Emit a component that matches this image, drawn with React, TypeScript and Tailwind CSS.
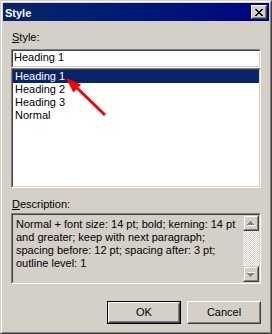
import React from "react";

const sunkenOuter =
  "border border-t-[#808080] border-l-[#808080] border-b-white border-r-white";
const sunkenInner =
  "border border-t-[#404040] border-l-[#404040] border-b-[#d4d0c8] border-r-[#d4d0c8]";
const raisedOuter =
  "border border-t-white border-l-white border-b-[#404040] border-r-[#404040]";
const raisedInner =
  "border border-t-[#d4d0c8] border-l-[#d4d0c8] border-b-[#808080] border-r-[#808080]";
const scrollOuter =
  "border border-t-[#d4d0c8] border-l-[#d4d0c8] border-b-[#404040] border-r-[#404040]";
const scrollInner =
  "border border-t-white border-l-white border-b-[#808080] border-r-[#808080]";

const styles = ["Heading 1", "Heading 2", "Heading 3", "Normal"];

const description = [
  "Normal + font size: 14 pt; bold; kerning: 14 pt",
  "and greater; keep with next paragraph;",
  "spacing before: 12 pt; spacing after: 3 pt;",
  "outline level: 1",
];

const CloseGlyph = () => (
  <svg width="8" height="7" viewBox="0 0 8 7" shapeRendering="crispEdges">
    <path
      d="M0 0h2v1h-2zM6 0h2v1h-2zM1 1h2v1h-2zM5 1h2v1h-2zM2 2h4v1h-4zM3 3h2v1h-2zM2 4h4v1h-4zM1 5h2v1h-2zM5 5h2v1h-2zM0 6h2v1h-2zM6 6h2v1h-2z"
      fill="#000"
    />
  </svg>
);

const ScrollArrow = ({ down }: { down?: boolean }) => (
  <div className={`w-[16px] h-[16px] ${scrollOuter}`}>
    <div className={`w-full h-full flex items-center justify-center ${scrollInner}`}>
      <svg width="8" height="5" viewBox="0 0 8 5" shapeRendering="crispEdges">
        <g transform={down ? "translate(0 5) scale(1 -1)" : undefined}>
          <path d="M4 1h1v1h-1zM3 2h3v1h-3zM2 3h5v1h-5zM1 4h7v1h-7z" fill="#fff" />
          <path d="M3 0h1v1h-1zM2 1h3v1h-3zM1 2h5v1h-5zM0 3h7v1h-7z" fill="#808080" />
        </g>
      </svg>
    </div>
  </div>
);

const Label = ({ hot, rest }: { hot: string; rest: string }) => (
  <div className="h-[13px] leading-[13px] pl-px">
    <span className="underline underline-offset-[1px]">{hot}</span>
    {rest}
  </div>
);

export default function App() {
  return (
    <div
      className="relative w-[272px] h-[334px] bg-[#d4d0c8] text-[11px] text-black border border-t-[#d4d0c8] border-l-[#d4d0c8] border-b-[#404040] border-r-[#404040]"
      style={{ fontFamily: '"Liberation Sans", Arial, sans-serif' }}
    >
      <div className="w-full h-full border border-t-white border-l-white border-b-[#808080] border-r-[#808080] p-px flex flex-col">
        {/* TITLE */}
        <div className="h-[18px] flex items-start justify-between bg-gradient-to-r from-[#0a246a] to-[#000080]">
          <span className="pl-[2px] pt-[4px] leading-[13px] font-bold text-white">Style</span>
          <div className={`mt-[2px] mr-[2px] w-[16px] h-[14px] bg-[#d4d0c8] ${raisedOuter}`}>
            <div className={`w-full h-full flex items-center justify-center ${raisedInner}`}>
              <CloseGlyph />
            </div>
          </div>
        </div>

        {/* BODY */}
        <div className="flex-1 px-2 flex flex-col">
          <div className="mt-[10px]">
            <Label hot="S" rest="tyle:" />
          </div>

          <div className={`mt-[5px] h-[19px] bg-white ${sunkenOuter}`}>
            <div className={`h-full pl-px leading-[13px] ${sunkenInner}`}>Heading 1</div>
          </div>

          <div className={`h-[120px] bg-white ${sunkenOuter}`}>
            <div className={`h-full ${sunkenInner}`}>
              {styles.map((s, i) => (
                <div
                  key={s}
                  className={
                    i === 0
                      ? "h-[13px] leading-[13px] pl-[2px] bg-[#0a246a] text-white"
                      : "h-[13px] leading-[13px] pl-[2px]"
                  }
                >
                  {s}
                </div>
              ))}
            </div>
          </div>

          <div className="mt-[10px]">
            <Label hot="D" rest="escription:" />
          </div>

          <div className={`mt-[2px] h-[71px] ${sunkenOuter}`}>
            <div className={`h-full flex ${sunkenInner}`}>
              <div className="flex-1 pt-[3px] pl-[3px]">
                {description.map((l) => (
                  <div key={l} className="h-[13px] leading-[13px] whitespace-nowrap">
                    {l}
                  </div>
                ))}
              </div>
              <div className="w-[16px] flex flex-col">
                <ScrollArrow />
                <div className="flex-1 bg-[image:repeating-conic-gradient(#d4d0c8_0%_25%,#ffffff_0%_50%)] bg-[length:2px_2px]" />
                <ScrollArrow down />
              </div>
            </div>
          </div>

          {/* BUTTONS */}
          <div className="mt-[17px] flex justify-end gap-[6px]">
            <div className="w-[74px] h-[23px] border border-black">
              <div className={`w-full h-full ${raisedOuter}`}>
                <div className={`w-full h-full flex items-center justify-center ${raisedInner}`}>OK</div>
              </div>
            </div>
            <div className={`w-[74px] h-[23px] ${raisedOuter}`}>
              <div className={`w-full h-full flex items-center justify-center ${raisedInner}`}>Cancel</div>
            </div>
          </div>
        </div>
      </div>

      {/* red annotation arrow */}
      <svg
        className="absolute left-[-1px] top-[-1px] pointer-events-none"
        width="272"
        height="334"
        viewBox="0 0 272 334"
      >
        <line x1="105" y1="115" x2="75" y2="86" stroke="#ff0000" strokeWidth="3" />
        <polygon points="66,78 81,84.6 73.4,92.4" fill="#ff0000" />
      </svg>
    </div>
  );
}
